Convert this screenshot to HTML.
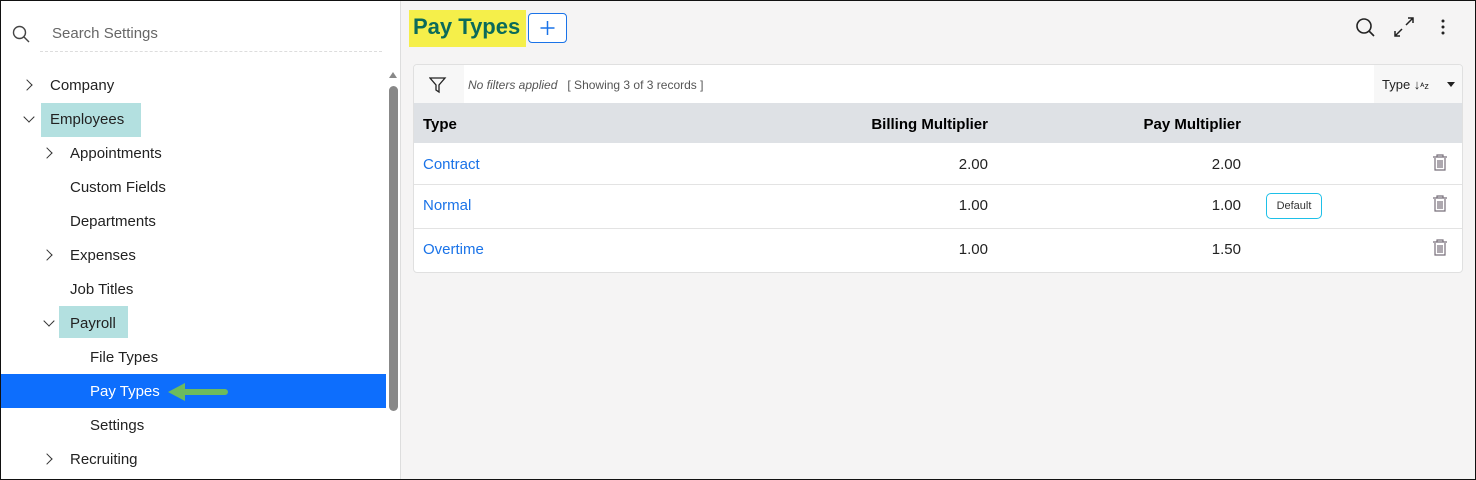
<!DOCTYPE html>
<html><head><style>
*{box-sizing:border-box;margin:0;padding:0}
body{width:1476px;height:480px;overflow:hidden;font-family:"Liberation Sans",sans-serif;position:relative;background:#f5f4f4}
.frame{position:absolute;inset:0;border:1px solid #111;pointer-events:none;z-index:10}
.side{position:absolute;left:0;top:0;width:401px;height:480px;background:#fff;border-right:1px solid #ddd}
.t{position:absolute;font-size:15px;color:#222;line-height:20px}
.hl{position:absolute;background:#b3e0e0}
.chev{position:absolute;width:8px;height:8px;border-right:1.3px solid #333;border-bottom:1.3px solid #333}
.r{position:absolute;text-align:right;font-size:15px;color:#222}
.a{position:absolute;font-size:15px;color:#1a73e8}
</style></head><body>
<div class="side">
<svg style="position:absolute;left:12px;top:25px" width="18" height="18"><circle cx="7.5" cy="7.5" r="6" fill="none" stroke="#444" stroke-width="1.4"/><line x1="12" y1="12" x2="17" y2="17" stroke="#444" stroke-width="1.4"/></svg>
<div class="t" style="left:52px;top:24px;color:#666">Search Settings</div>
<div style="position:absolute;left:40px;top:51px;width:342px;border-top:1px dashed #ddd"></div>
<div class="chev" style="left:23px;top:81px;transform:rotate(-45deg)"></div>
<div class="t" style="left:50px;top:76px">Company</div>
<div class="hl" style="left:41px;top:103px;width:100px;height:34px"></div>
<div class="chev" style="left:25px;top:113px;transform:rotate(45deg)"></div>
<div class="t" style="left:50px;top:110px">Employees</div>
<div class="chev" style="left:43px;top:149px;transform:rotate(-45deg)"></div>
<div class="t" style="left:70px;top:144px">Appointments</div>
<div class="t" style="left:70px;top:178px">Custom Fields</div>
<div class="t" style="left:70px;top:212px">Departments</div>
<div class="chev" style="left:43px;top:251px;transform:rotate(-45deg)"></div>
<div class="t" style="left:70px;top:246px">Expenses</div>
<div class="t" style="left:70px;top:280px">Job Titles</div>
<div class="hl" style="left:59px;top:306px;width:69px;height:32px"></div>
<div class="chev" style="left:45px;top:317px;transform:rotate(45deg)"></div>
<div class="t" style="left:70px;top:314px">Payroll</div>
<div class="t" style="left:90px;top:348px">File Types</div>
<div style="position:absolute;left:1px;top:374px;width:385px;height:34px;background:#0d6efd"></div>
<div class="t" style="left:90px;top:382px;color:#fff">Pay Types</div>
<svg style="position:absolute;left:165px;top:380px" width="65" height="24"><path d="M3 12 L20 3 L20 9 L60 9 A3 3 0 0 1 60 15 L20 15 L20 21 Z" fill="#6cbb5e"/></svg>
<div class="t" style="left:90px;top:416px">Settings</div>
<div class="chev" style="left:43px;top:455px;transform:rotate(-45deg)"></div>
<div class="t" style="left:70px;top:450px">Recruiting</div>
<div style="position:absolute;left:389px;top:72px;width:0;height:0;border-left:4px solid transparent;border-right:4px solid transparent;border-bottom:6px solid #888"></div>
<div style="position:absolute;left:389px;top:86px;width:9px;height:325px;background:#888;border-radius:5px"></div>
</div>
<div style="position:absolute;left:409px;top:10px;width:117px;height:37px;background:#f5ef4a"></div>
<div style="position:absolute;left:413px;top:14px;font-size:22px;font-weight:bold;color:#0b6b5a">Pay Types</div>
<div style="position:absolute;left:528px;top:13px;width:39px;height:30px;border:1.3px solid #1a73e8;border-radius:4px;background:#fff"><svg width="37" height="28"><path d="M18.5 7v14M11.5 14h14" stroke="#1a73e8" stroke-width="1.5"/></svg></div>
<svg style="position:absolute;left:1355px;top:17px" width="22" height="22"><circle cx="9" cy="9" r="7" fill="none" stroke="#222" stroke-width="1.6"/><line x1="14" y1="14" x2="19" y2="19" stroke="#222" stroke-width="1.6"/></svg>
<svg style="position:absolute;left:1394px;top:17px" width="22" height="22"><path d="M12 8 L19 1 M14 1h5v5 M8 12 L1 19 M1 14v5h5" fill="none" stroke="#222" stroke-width="1.5"/></svg>
<svg style="position:absolute;left:1439px;top:18px" width="8" height="18"><circle cx="4" cy="3" r="1.5" fill="#222"/><circle cx="4" cy="9" r="1.5" fill="#222"/><circle cx="4" cy="15" r="1.5" fill="#222"/></svg>
<div style="position:absolute;left:413px;top:64px;width:1050px;height:209px;background:#fff;border:1px solid #e0e0e0;border-radius:4px;overflow:hidden">
<div style="position:absolute;left:0;top:0;width:50px;height:38px;background:#f7f7f7"></div>
<svg style="position:absolute;left:15px;top:11px" width="18" height="18"><path d="M1 2h15l-6 7v7l-3-2v-5z" fill="none" stroke="#222" stroke-width="1.3"/></svg>
<div style="position:absolute;left:54px;top:13px;font-size:12px;color:#555"><i>No filters applied</i>&nbsp;&nbsp; [ Showing 3 of 3 records ]</div>
<div style="position:absolute;left:960px;top:0;width:90px;height:38px;background:#f7f7f7"></div>
<div style="position:absolute;left:968px;top:12px;font-size:13px;color:#222">Type ↓<span style="font-size:9px">ᴬz</span></div>
<div style="position:absolute;left:1033px;top:17px;border-left:4px solid transparent;border-right:4px solid transparent;border-top:5px solid #222"></div>
<div style="position:absolute;left:0;top:38px;width:1050px;height:40px;background:#dee1e5"></div>
<div style="position:absolute;left:9px;top:51px;font-size:15px;font-weight:bold">Type</div>
<div style="position:absolute;right:474px;top:51px;font-size:15px;font-weight:bold">Billing Multiplier</div>
<div style="position:absolute;right:221px;top:51px;font-size:15px;font-weight:bold">Pay Multiplier</div>
<div style="position:absolute;left:0;top:119px;width:100%;border-top:1px solid #e3e3e3"></div>
<div style="position:absolute;left:0;top:163px;width:100%;border-top:1px solid #e3e3e3"></div>
<div class="a" style="left:9px;top:91px">Contract</div>
<div class="r" style="right:474px;top:91px">2.00</div><div class="r" style="right:221px;top:91px">2.00</div>
<div class="a" style="left:9px;top:132px">Normal</div>
<div class="r" style="right:474px;top:132px">1.00</div><div class="r" style="right:221px;top:132px">1.00</div>
<div style="position:absolute;left:852px;top:128px;width:56px;height:26px;border:1px solid #1ec0e8;border-radius:5px;font-size:11px;color:#333;text-align:center;line-height:24px">Default</div>
<div class="a" style="left:9px;top:176px">Overtime</div>
<div class="r" style="right:474px;top:176px">1.00</div><div class="r" style="right:221px;top:176px">1.50</div>
<svg style="position:absolute;left:1018px;top:89px" width="16" height="18"><path d="M1 3h14M5 3V1h6v2M3 4v12h10V4M6 6v8M8 6v8M10 6v8" fill="none" stroke="#776f7a" stroke-width="1.2"/></svg>
<svg style="position:absolute;left:1018px;top:130px" width="16" height="18"><path d="M1 3h14M5 3V1h6v2M3 4v12h10V4M6 6v8M8 6v8M10 6v8" fill="none" stroke="#776f7a" stroke-width="1.2"/></svg>
<svg style="position:absolute;left:1018px;top:174px" width="16" height="18"><path d="M1 3h14M5 3V1h6v2M3 4v12h10V4M6 6v8M8 6v8M10 6v8" fill="none" stroke="#776f7a" stroke-width="1.2"/></svg>
</div>
<div class="frame"></div>
</body></html>
